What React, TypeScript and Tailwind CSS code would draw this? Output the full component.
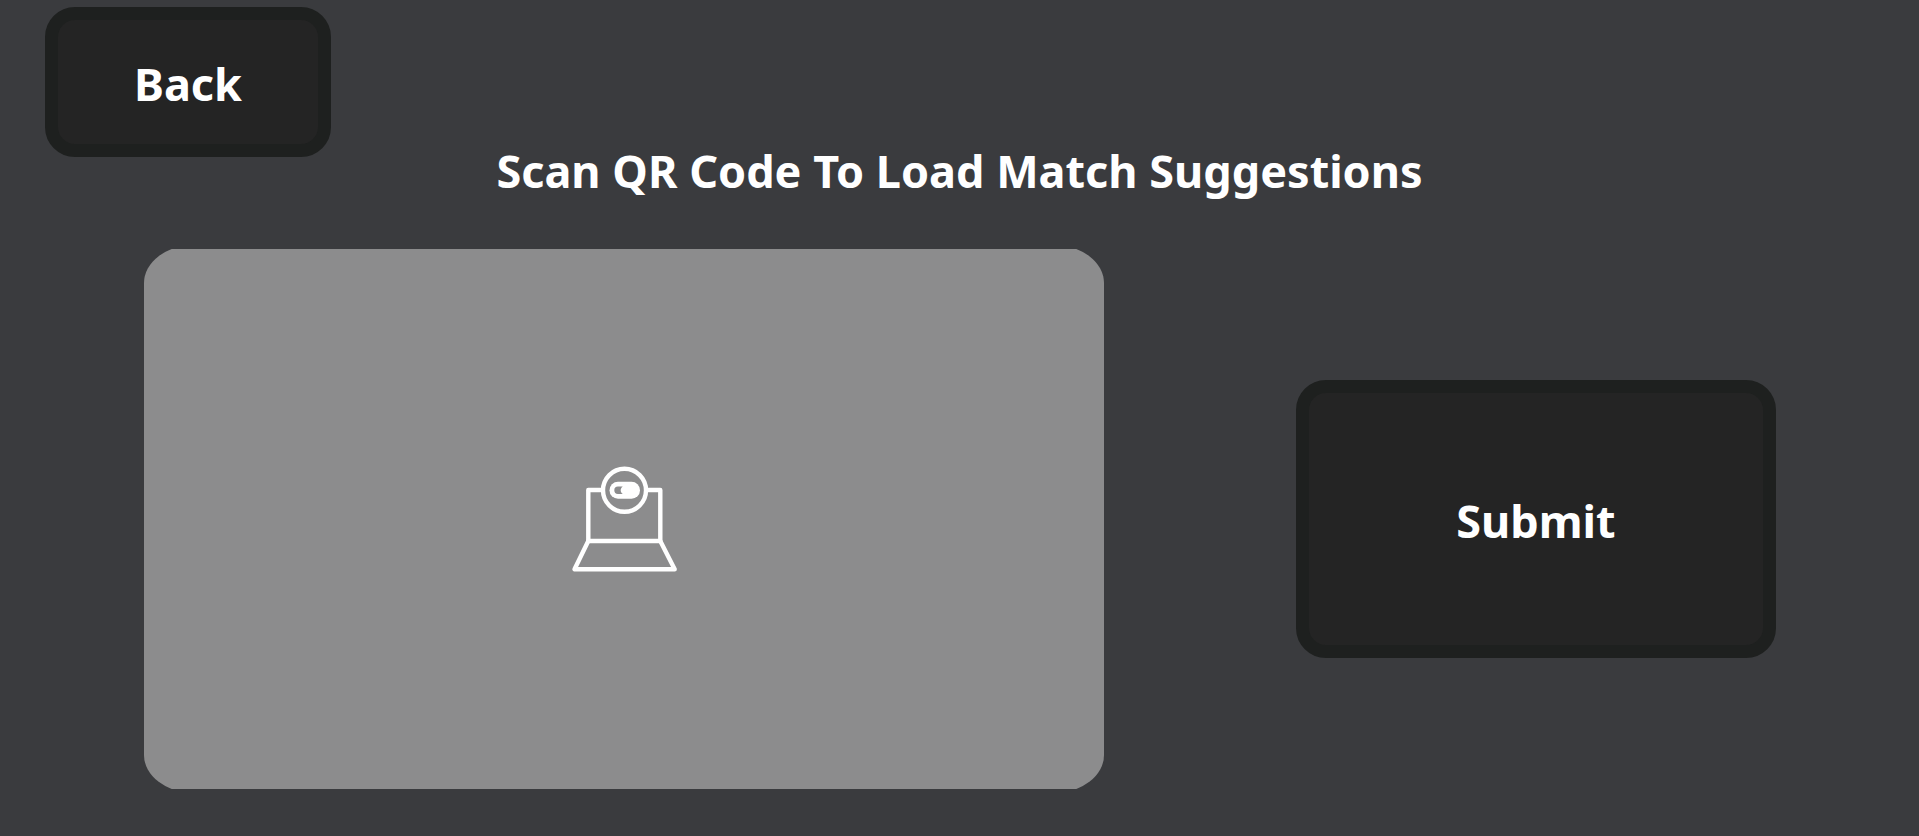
import { useState } from "react";

function WebcamIcon() {
  return (
    <svg viewBox="0 0 130 130" className="size-[130px]" fill="none" stroke="#fff" strokeWidth="4.4" strokeLinejoin="round" strokeLinecap="round" aria-hidden="true">
      <path d="M43.500 36H29.300V87H101.300V36H87.500" />
      <path d="M29.300 87L15.500 115.200H115.700L101.300 87" />
      <circle cx="65.500" cy="36.300" r="21.500" />
      <rect x="50.500" y="27.700" width="30.500" height="17" rx="8.500" fill="#fff" stroke="none" />
      <path d="M63.800 32.500C61 34.200 61 38.200 63.800 39.900H59A3.700 3.700 0 0 1 59 32.500Z" fill="#8c8c8d" stroke="none" />
    </svg>
  );
}

const buttonLook =
  "cursor-pointer rounded-[30px] border-[13px] border-[#1e201f] bg-[#242424] pt-1 text-center text-[45px] leading-[64px] font-bold text-white";

export default function App() {
  const [submitted, setSubmitted] = useState(false);
  return (
    <main className="flex min-h-screen flex-col bg-[#3a3b3e] pt-[7px] font-['Segoe_UI','Noto_Sans',sans-serif] text-white">
      <div className="flex pl-[45px]">
        <button type="button" className={`${buttonLook} h-[150px] w-[286px]`}>
          Back
        </button>
      </div>
      <h1 className="-mt-[18px] text-center text-[45px] leading-[64px] font-bold">Scan QR Code To Load Match Suggestions</h1>
      <div className="mt-[46px] flex items-center justify-between pr-[143px] pl-36">
        <section aria-label="Camera" className="aspect-video w-[58.83%] overflow-hidden">
          <div className="-my-1 flex h-[calc(100%+8px)] items-center justify-center rounded-[50px/38px] bg-[#8c8c8d]">
            <WebcamIcon />
          </div>
        </section>
        <button
          type="button"
          aria-pressed={submitted}
          onClick={() => setSubmitted(true)}
          className={`${buttonLook} h-[278px] w-[29.42%]`}
        >
          Submit
        </button>
      </div>
    </main>
  );
}
